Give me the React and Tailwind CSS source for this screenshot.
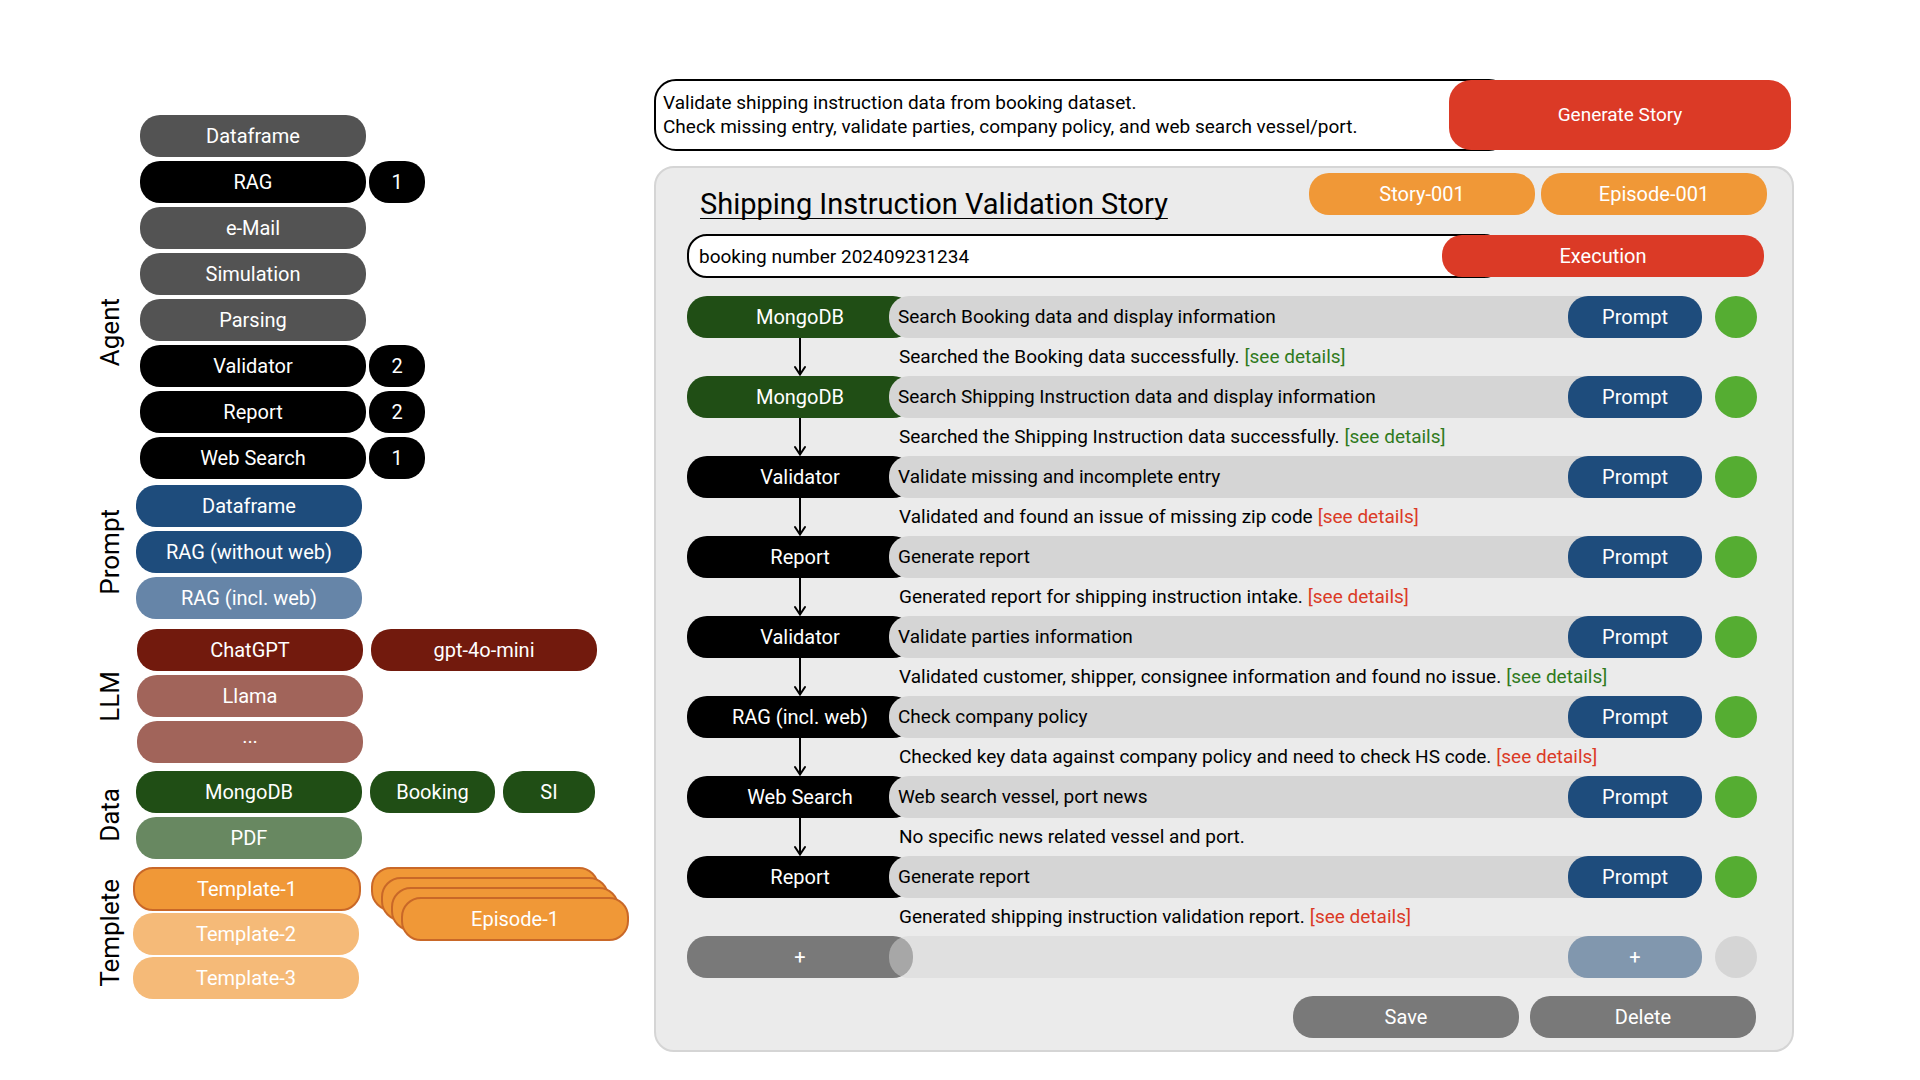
const AGENT_DIM = 'bg-[#535353]';
const BLACK = 'bg-black';
const GREEN = 'bg-[#204e15]';

const groups = [
  {
    label: 'Agent',
    className: 'pl-2',
    labelClass: 'pt-[70px]',
    listClass: 'gap-1',
    rowGap: 'gap-[3px]',
    spacing: '',
    items: [
      { text: 'Dataframe', color: AGENT_DIM },
      { text: 'RAG', color: BLACK, count: 1 },
      { text: 'e-Mail', color: AGENT_DIM },
      { text: 'Simulation', color: AGENT_DIM },
      { text: 'Parsing', color: AGENT_DIM },
      { text: 'Validator', color: BLACK, count: 2 },
      { text: 'Report', color: BLACK, count: 2 },
      { text: 'Web Search', color: BLACK, count: 1 },
    ],
  },
  {
    label: 'Prompt',
    className: 'pl-1',
    listClass: 'gap-1',
    rowGap: 'gap-2',
    spacing: 'mt-1.5',
    items: [
      { text: 'Dataframe', color: 'bg-[#1e4c7c]' },
      { text: 'RAG (without web)', color: 'bg-[#1e4c7c]' },
      { text: 'RAG (incl. web)', color: 'bg-[#6685a8]' },
    ],
  },
  {
    label: 'LLM',
    className: 'pl-[5px]',
    listClass: 'gap-1',
    rowGap: 'gap-2',
    spacing: 'mt-2.5',
    items: [
      { text: 'ChatGPT', color: 'bg-[#721a0d]', extras: [{ text: 'gpt-4o-mini', width: 'w-[226px]' }] },
      { text: 'Llama', color: 'bg-[#a1645a]' },
      { text: '···', color: 'bg-[#a1645a]' },
    ],
  },
  {
    label: 'Data',
    className: 'pl-1',
    listClass: 'gap-1',
    rowGap: 'gap-2',
    spacing: 'mt-2',
    items: [
      {
        text: 'MongoDB',
        color: GREEN,
        extras: [
          { text: 'Booking', width: 'w-[125px]' },
          { text: 'SI', width: 'w-[92px]' },
        ],
      },
      { text: 'PDF', color: 'bg-[#688861]' },
    ],
  },
  {
    label: 'Templete',
    className: 'pl-px',
    listClass: 'gap-0.5',
    rowGap: 'gap-2.5',
    spacing: 'mt-2',
    items: [
      { text: 'Template-1', color: 'bg-[#f09837]', selected: true, stack: 'Episode-1' },
      { text: 'Template-2', color: 'bg-[#f5ba78]' },
      { text: 'Template-3', color: 'bg-[#f5ba78]' },
    ],
  },
];

const steps = [
  { agent: 'MongoDB', color: GREEN, task: 'Search Booking data and display information', result: 'Searched the Booking data successfully.', status: 'ok' },
  { agent: 'MongoDB', color: GREEN, task: 'Search Shipping Instruction data and display information', result: 'Searched the Shipping Instruction data successfully.', status: 'ok' },
  { agent: 'Validator', color: BLACK, task: 'Validate missing and incomplete entry', result: 'Validated and found an issue of missing zip code', status: 'issue' },
  { agent: 'Report', color: BLACK, task: 'Generate report', result: 'Generated report for shipping instruction intake.', status: 'issue' },
  { agent: 'Validator', color: BLACK, task: 'Validate parties information', result: 'Validated customer, shipper, consignee information and found no issue.', status: 'ok' },
  { agent: 'RAG (incl. web)', color: BLACK, task: 'Check company policy', result: 'Checked key data against company policy and need to check HS code.', status: 'issue' },
  { agent: 'Web Search', color: BLACK, task: 'Web search vessel, port news', result: 'No specific news related vessel and port.' },
  { agent: 'Report', color: BLACK, task: 'Generate report', result: 'Generated shipping instruction validation report.', status: 'issue' },
];

function Pill({ className, children, ...props }) {
  return (
    <button
      type="button"
      className={`flex h-[42px] shrink-0 items-center justify-center rounded-[20px] text-[20px] text-white ${className}`}
      {...props}
    >
      {children}
    </button>
  );
}

function EpisodeStack({ label }) {
  const card = 'h-[44px] w-[228px] rounded-[20px] border-2 border-[#c96828] bg-[#f09837]';
  return (
    <div className="grid h-[44px] w-[258px] content-start">
      <span className={`col-start-1 row-start-1 ${card}`} />
      <span className={`col-start-1 row-start-1 mt-[10px] ml-[10px] ${card}`} />
      <span className={`col-start-1 row-start-1 mt-[20px] ml-[20px] ${card}`} />
      <button type="button" className={`col-start-1 row-start-1 mt-[30px] ml-[30px] text-[20px] text-white ${card}`}>
        {label}
      </button>
    </div>
  );
}

function Group({ group }) {
  return (
    <section className={`flex items-stretch ${group.spacing}`}>
      <div className={`mr-1.5 flex w-8 items-center justify-center ${group.labelClass || ''}`}>
        <h2 className="rotate-180 text-[26px] leading-8 whitespace-nowrap [writing-mode:vertical-rl]">{group.label}</h2>
      </div>
      <div className={`flex flex-col ${group.className} ${group.listClass}`}>
        {group.items.map((item) => (
          <div key={item.text} className={`flex ${group.rowGap}`}>
            <Pill className={`${item.color} ${item.selected ? 'h-[44px] w-[228px] border-2 border-[#c96828]' : 'w-[226px]'}`}>
              {item.text}
            </Pill>
            {item.count && <Pill className={`w-[56px] ${item.color}`}>{item.count}</Pill>}
            {item.extras?.map((extra) => (
              <Pill key={extra.text} className={`${extra.width} ${item.color}`}>
                {extra.text}
              </Pill>
            ))}
            {item.stack && <EpisodeStack label={item.stack} />}
          </div>
        ))}
      </div>
    </section>
  );
}

function Arrow() {
  return (
    <svg width="14" height="38" viewBox="0 0 14 38" fill="none" stroke="black" strokeWidth="2" aria-hidden="true">
      <path d="M7 0V36" />
      <path d="M2 29L7 36.5L12 29" strokeLinecap="round" />
    </svg>
  );
}

function Step({ step, last }) {
  return (
    <li>
      <div className="flex">
        <Pill className={`w-[226px] ${step.color}`}>{step.agent}</Pill>
        <div className="relative -ml-6 flex h-[42px] min-w-0 flex-1 items-center rounded-[20px] bg-[#d5d5d5] pl-[9px]">
          {step.task}
        </div>
        <Pill className="relative -ml-[134px] w-[134px] bg-[#1e4c7c]">Prompt</Pill>
        <span role="img" aria-label="Completed" className="ml-[13px] size-[42px] shrink-0 rounded-full bg-[#55ad32]" />
      </div>
      <div className="flex h-[38px]">
        <div className="flex w-[226px] shrink-0 justify-center">{!last && <Arrow />}</div>
        <p className="-ml-[14px] flex items-center gap-[5px] whitespace-nowrap">
          {step.result}
          {step.status && (
            <a href="#details" className={step.status === 'ok' ? 'text-[#2f7a1c]' : 'text-[#db3a26]'}>
              [see details]
            </a>
          )}
        </p>
      </div>
    </li>
  );
}

export default function App() {
  return (
    <div className="flex min-h-screen bg-white pr-[126px] pl-[94px] font-['Roboto',sans-serif] text-[19px] leading-6 text-black">
      <aside className="w-[560px] shrink-0 pt-[115px]">
        {groups.map((group) => (
          <Group key={group.label} group={group} />
        ))}
      </aside>

      <main className="min-w-0 flex-1 pt-[79px]">
        <form className="flex pr-[3px]" onSubmit={(e) => e.preventDefault()}>
          <textarea
            aria-label="Story request"
            rows={2}
            className="block h-[72px] min-w-0 flex-1 resize-none overflow-hidden rounded-[22px] border-2 border-black bg-white px-[7px] py-[10px] outline-none"
            defaultValue={'Validate shipping instruction data from booking dataset.\nCheck missing entry, validate parties, company policy, and web search vessel/port.'}
          />
          <button type="button" className="relative my-px -ml-[62px] w-[342px] rounded-[22px] bg-[#db3a26] text-white">
            Generate Story
          </button>
        </form>

        <section className="mt-[15px] rounded-[20px] border-2 border-[#d5d5d5] bg-[#ebebeb] pb-[12px] pl-[31px]">
          <header className="flex items-start pt-[5px] pr-[25px]">
            <h1 className="flex-1 pt-[13px] pl-[13px] text-[29px] leading-9 underline decoration-1 underline-offset-4 [text-decoration-skip-ink:none]">
              Shipping Instruction Validation Story
            </h1>
            <div className="flex gap-1.5">
              <Pill className="w-[226px] bg-[#f09837]">Story-001</Pill>
              <Pill className="w-[226px] bg-[#f09837]">Episode-001</Pill>
            </div>
          </header>

          <form className="mt-[12px] flex items-center pr-7" onSubmit={(e) => e.preventDefault()}>
            <input
              aria-label="Story input"
              className="h-[44px] min-w-0 flex-1 rounded-[20px] border-2 border-black bg-white px-[10px] outline-none"
              defaultValue="booking number 202409231234"
            />
            <Pill className="relative -ml-[62px] w-[322px] bg-[#db3a26]">Execution</Pill>
          </form>

          <ol className="mt-[18px] pr-[35px]">
            {steps.map((step, i) => (
              <Step key={i} step={step} last={i === steps.length - 1} />
            ))}
            <li className="flex">
              <Pill aria-label="Add agent" className="w-[226px] bg-[#797979]">+</Pill>
              <div className="relative -ml-6 h-[42px] flex-1 rounded-[20px] bg-[#d5d5d5]/50" />
              <Pill aria-label="Add prompt" className="relative -ml-[134px] w-[134px] bg-[#8197ae]">+</Pill>
              <span role="img" aria-label="Pending" className="ml-[13px] size-[42px] shrink-0 rounded-full bg-[#d5d5d5]" />
            </li>
          </ol>

          <footer className="mt-[18px] flex justify-end gap-[11px] pr-9">
            <Pill className="w-[226px] bg-[#797979]">Save</Pill>
            <Pill className="w-[226px] bg-[#797979]">Delete</Pill>
          </footer>
        </section>
      </main>
    </div>
  );
}
